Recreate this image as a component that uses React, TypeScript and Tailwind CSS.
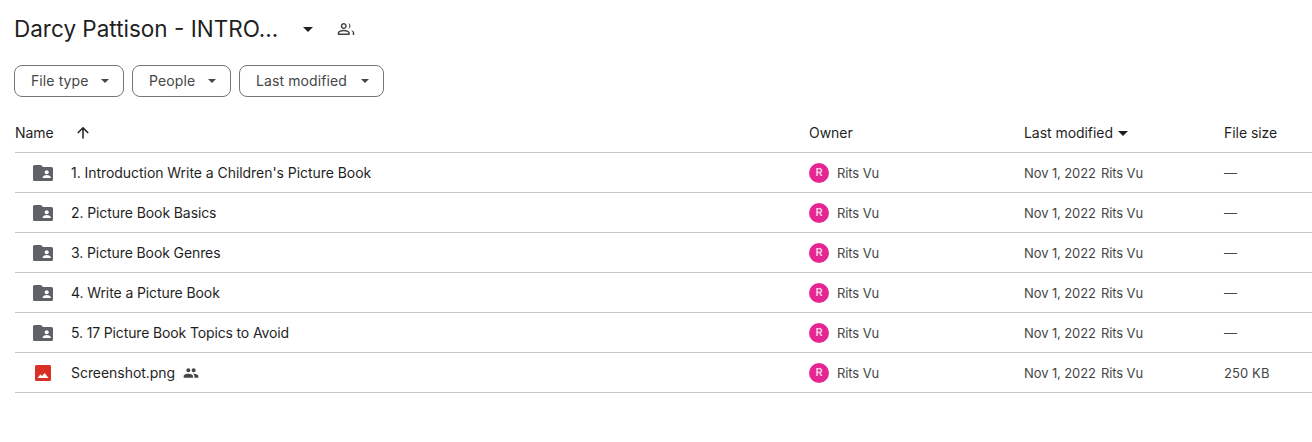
import React from "react";

const Caret = ({ className = "" }: { className?: string }) => (
  <svg viewBox="0 0 10 5" className={className} fill="currentColor"><path d="M0 0h10L5 5z" /></svg>
);

const SharedFolder = () => (
  <svg width="20" height="20" viewBox="0 0 20 20" className="text-[#5f6368]" fill="currentColor">
    <path d="M1.500 2H8l2 2h8.500A1.500 1.500 0 0 1 20 5.500v11a1.500 1.500 0 0 1-1.500 1.500h-17A1.500 1.500 0 0 1 0 16.500v-13A1.500 1.500 0 0 1 1.500 2z" />
    <circle cx="13.700" cy="9.300" r="2" fill="#fff" />
    <path d="M9.700 15v-.9c0-1.400 2.700-2.100 4-2.100s4 .7 4 2.100v.9z" fill="#fff" />
  </svg>
);

const ImageIcon = () => (
  <svg width="16" height="16" viewBox="0 0 16 16">
    <rect width="16" height="16" rx="1.500" fill="#d93025" />
    <path d="M2.500 13 5.500 9.300 7 11 9.700 8 13.500 13z" fill="#fff" />
  </svg>
);

const PeopleFilled = () => (
  <svg width="16" height="16" viewBox="0 0 24 24" fill="#444746">
    <path d="M16 11c1.660 0 2.990-1.340 2.990-3S17.660 5 16 5s-3 1.340-3 3 1.340 3 3 3zm-8 0c1.660 0 2.990-1.340 2.990-3S9.660 5 8 5 5 6.340 5 8s1.340 3 3 3zm0 2c-2.330 0-7 1.170-7 3.500V19h14v-2.500C15 14.170 10.330 13 8 13zm8 0c-.29 0-.62.020-.97.050 1.160.84 1.970 1.970 1.970 3.450V19h6v-2.500c0-2.330-4.670-3.500-7-3.500z" />
  </svg>
);

const PeopleOutline = () => (
  <svg width="18" height="18" viewBox="0 0 24 24" fill="#444746">
    <path d="M9 12c2.210 0 4-1.790 4-4s-1.790-4-4-4-4 1.790-4 4 1.790 4 4 4zm0-6c1.100 0 2 .9 2 2s-.9 2-2 2-2-.9-2-2 .9-2 2-2zM9 13c-2.670 0-8 1.340-8 4v3h16v-3c0-2.660-5.330-4-8-4zm6 5H3v-1c.2-.7 3.300-2 6-2s5.800 1.300 6 2v1zM15 4.100c1.500.5 3 2 3 3.900s-1.500 3.400-3 3.900c.8-1 1.500-2.400 1.500-3.900S15.800 5.100 15 4.100zM18.500 13.700c1.300.9 2.500 2 2.500 3.300v3h2v-3c0-1.700-2-2.800-4.500-3.300z" />
  </svg>
);

const Chip = ({ label, w }: { label: string; w: string }) => (
  <button className={`flex h-8 items-center justify-between rounded-lg border border-[#747775] pl-4 pr-[14px] tracking-[0.1px] text-[#444746] ${w}`}>
    <span>{label}</span>
    <Caret className="h-[4px] w-[8px] text-[#444746]" />
  </button>
);

const rows = [
  { name: "1. Introduction Write a Children's Picture Book", size: "—", t: "tracking-[-0.05px]" },
  { name: "2. Picture Book Basics", size: "—", t: "tracking-[-0.1px]" },
  { name: "3. Picture Book Genres", size: "—", t: "tracking-[-0.1px]" },
  { name: "4. Write a Picture Book", size: "—", t: "tracking-[-0.1px]" },
  { name: "5. 17 Picture Book Topics to Avoid", size: "—", t: "tracking-[-0.14px]" },
  { name: "Screenshot.png", size: "250 KB", file: true, t: "tracking-[-0.05px]" },
];

export default function App() {
  return (
    <div className="h-[442px] w-[1312px] overflow-hidden bg-white pl-[15px] font-['Inter',sans-serif] text-sm tracking-[-0.05px] text-[#444746]">
      <div className="flex h-[58px] items-center">
        <span className="-ml-px w-[289px] text-[22.5px] tracking-normal leading-7 text-[#1f1f1f]">Darcy Pattison - INTRO...</span>
        <Caret className="h-[5px] w-[10px] text-[#1f1f1f]" />
        <span className="ml-[24px] flex"><PeopleOutline /></span>
      </div>
      <div className="mt-[7px] -ml-px flex gap-2">
        <Chip label="File type" w="w-[110px]" />
        <Chip label="People" w="w-[99px]" />
        <Chip label="Last modified" w="w-[145px]" />
      </div>
      <div className="mt-4 flex h-[40px] items-center border-b border-[#c7c7c7] pt-[1px] text-[#1f1f1f]">
        <div className="flex w-[794px] items-center">
          <span className="w-[60px]">Name</span>
          <svg width="16" height="16" viewBox="0 0 16 16" fill="none" stroke="#1f1f1f" strokeWidth="1.500">
            <path d="M8 13.500V3M2.800 8 8 2.800 13.200 8" />
          </svg>
        </div>
        <div className="w-[215px]">Owner</div>
        <div className="flex w-[200px] items-center gap-[5px]">
          <span>Last modified</span>
          <Caret className="h-[5px] w-[10px] text-[#1f1f1f]" />
        </div>
        <div>File size</div>
      </div>
      {rows.map((r) => (
        <div key={r.name} className="flex h-[40px] items-center border-b border-[#c7c7c7] pt-[1px]">
          <div className="flex w-[794px] items-center">
            <div className="flex w-[56px] items-center pl-[18px]">
              {r.file ? <span className="ml-[2px] flex"><ImageIcon /></span> : <SharedFolder />}
            </div>
            <span className={`text-[#1f1f1f] ${r.t}`}>{r.name}</span>
            {r.file && <span className="ml-2 flex"><PeopleFilled /></span>}
          </div>
          <div className="flex w-[215px] items-center gap-2">
            <span className="flex h-5 w-5 items-center justify-center rounded-full bg-[#e52592] text-[11px] font-semibold text-[#fbd0e8]">R</span>
            <span className="text-[13px] tracking-[-0.1px]">Rits Vu</span>
          </div>
          <div className="flex w-[200px] items-center gap-[5px] text-[13px] tracking-[-0.1px]">
            <span>Nov 1, 2022</span>
            <span>Rits Vu</span>
          </div>
          <div className="text-[13px] tracking-[0.1px]">{r.size}</div>
        </div>
      ))}
    </div>
  );
}
